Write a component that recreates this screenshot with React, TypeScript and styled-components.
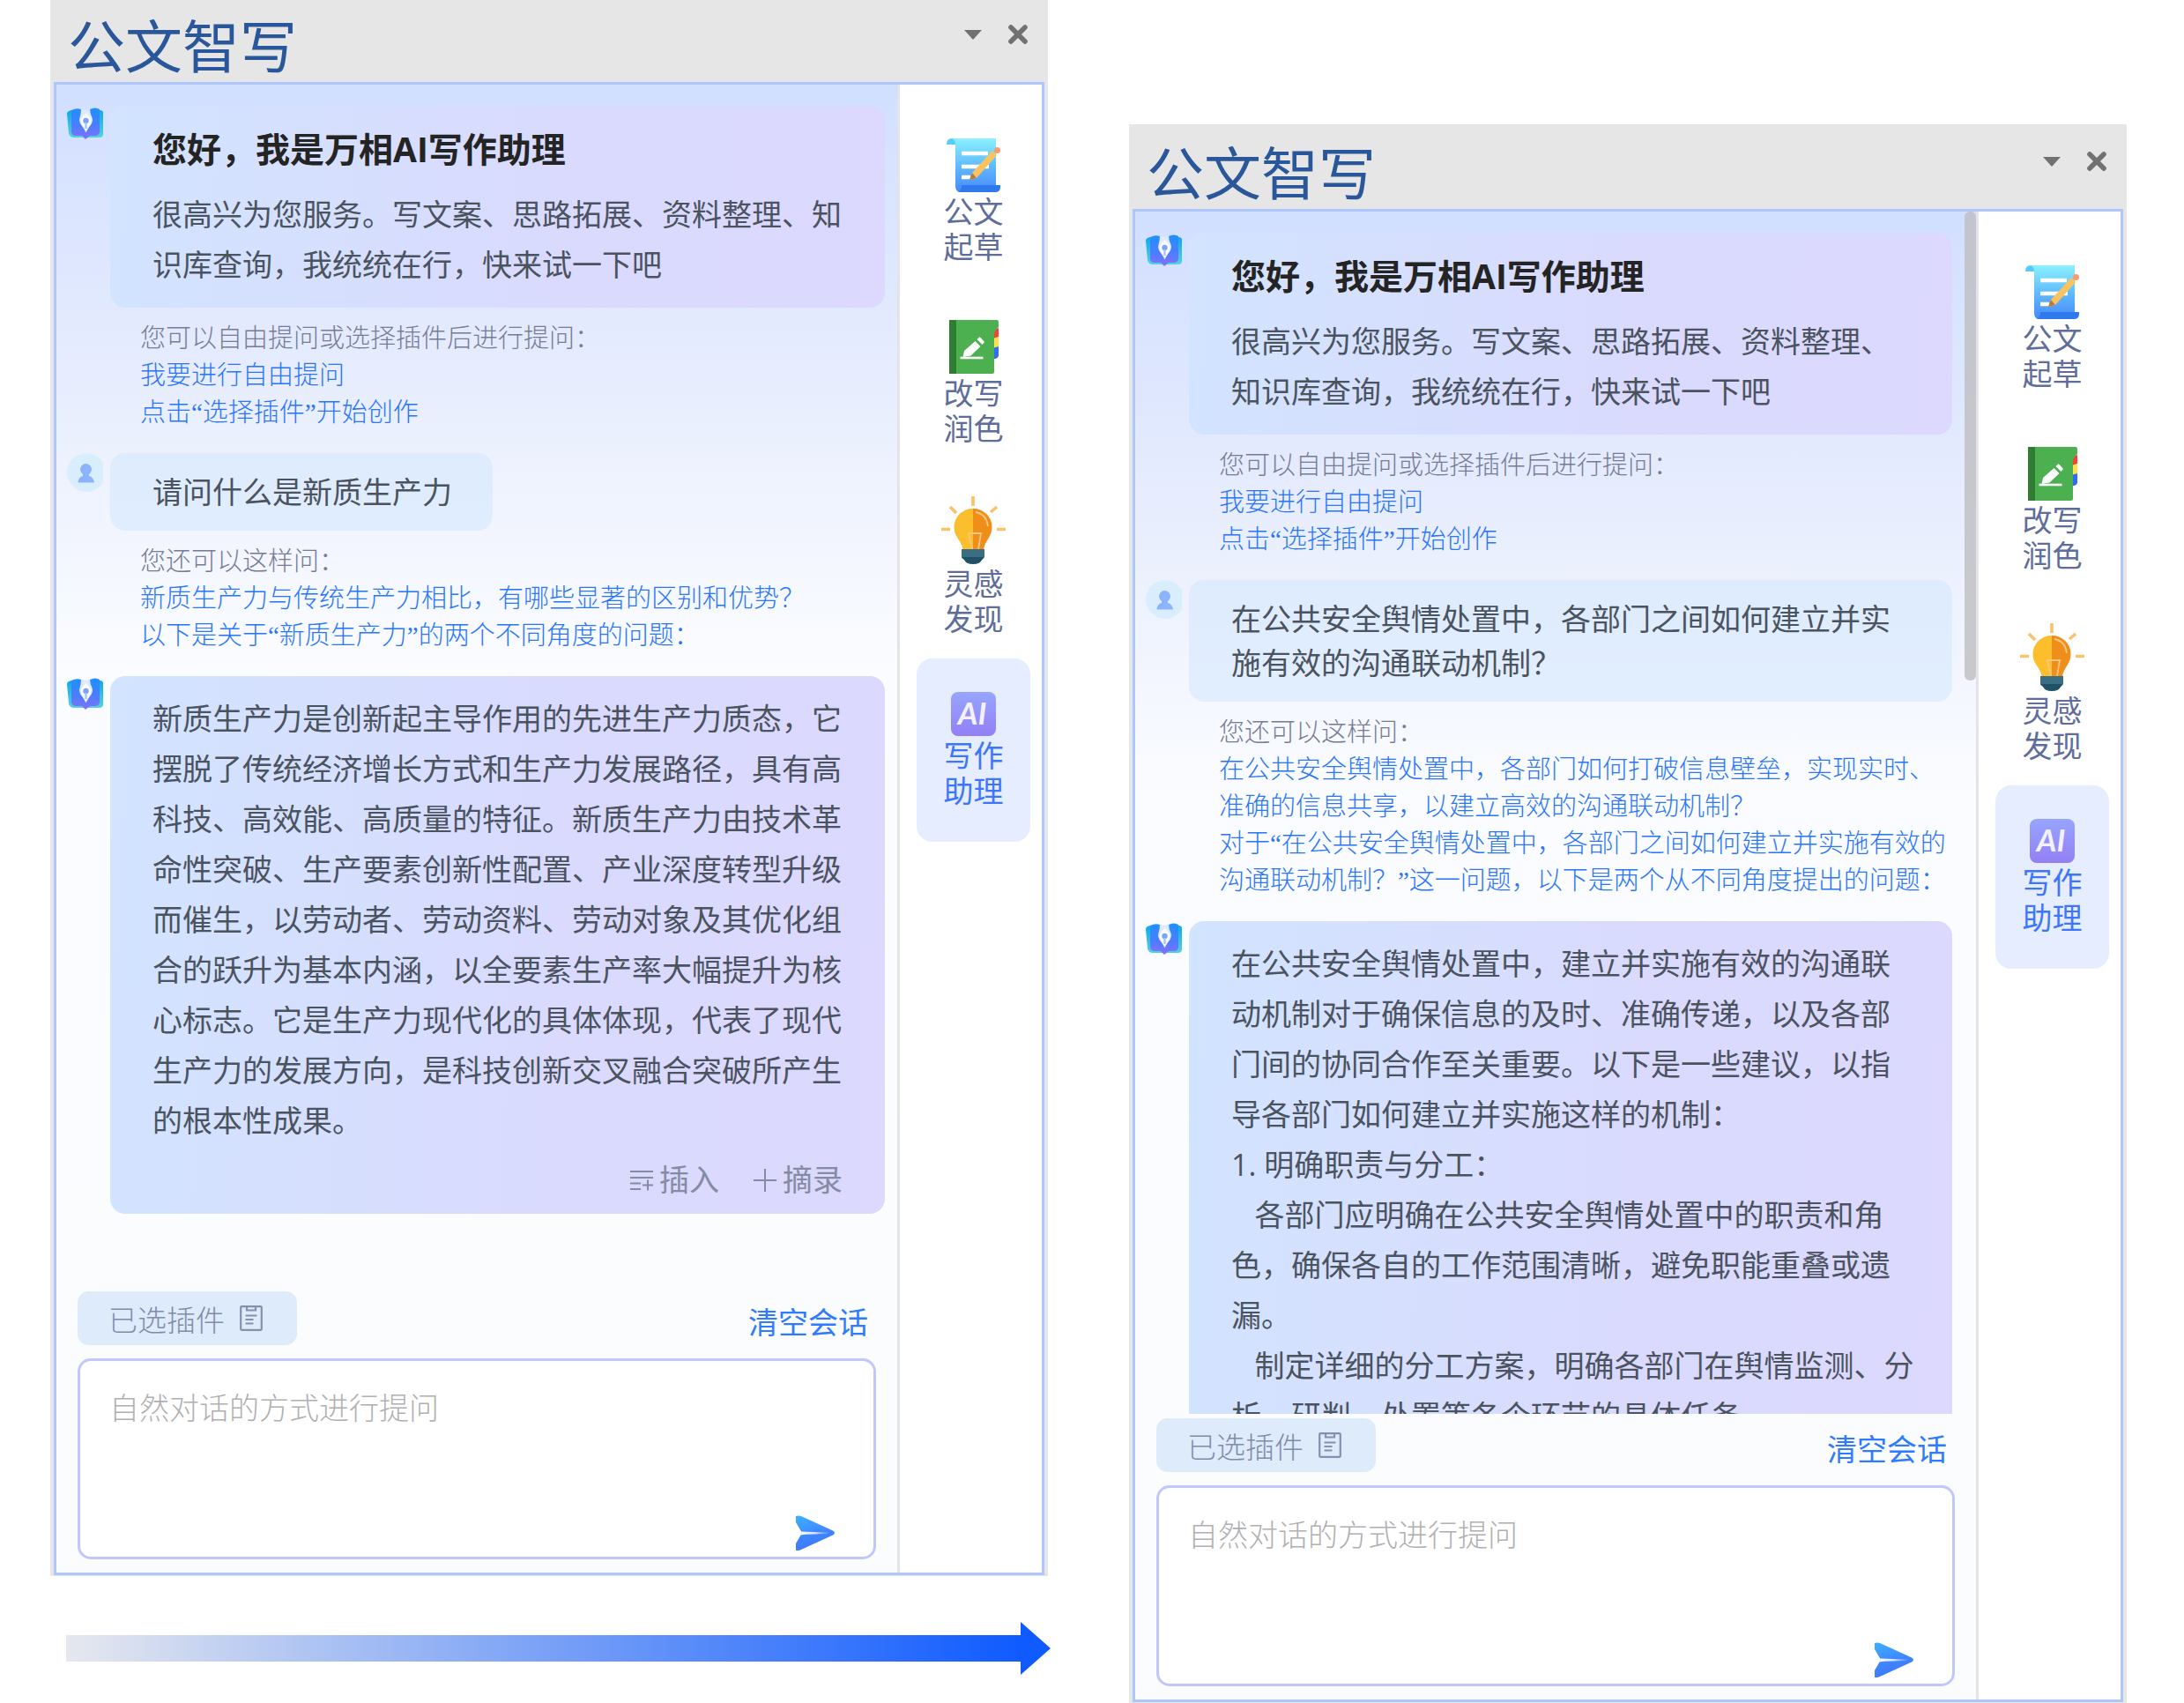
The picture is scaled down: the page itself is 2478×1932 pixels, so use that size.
import React from 'react';
import styled, { createGlobalStyle, css } from 'styled-components';

const sans = `"Open Sans", "Noto Sans CJK SC", sans-serif`;
const serif = `"Liberation Serif", "Noto Sans CJK SC", serif`;

const GlobalStyle = createGlobalStyle`
  *, *::before, *::after { box-sizing: border-box; }
  body { margin: 0; background: #fff; font-family: ${sans}; }
  h1, h2, p { margin: 0; font-weight: 400; }
  button { border: 0; padding: 0; background: none; font: inherit; color: inherit; cursor: pointer; }
  svg { display: block; }
`;

const Page = styled.main`
  display: grid;
  grid-template-columns: 1fr 1fr;
  gap: 92px;
  height: 100vh;
  padding: 0 65px 0 57px;
`;

const Column = styled.div<{ $top?: number }>`
  display: flex;
  flex-direction: column;
  min-width: 0;
  min-height: 0;
  padding-top: ${(p) => p.$top ?? 0}px;
`;

const Pane = styled.section`
  flex: 1;
  min-height: 0;
  display: flex;
  flex-direction: column;
  padding: 0 4px 1px;
  background: #e6e6e6;
`;

const PaneHeader = styled.header<{ $height: number }>`
  flex: none;
  display: flex;
  align-items: flex-end;
  justify-content: space-between;
  height: ${(p) => p.$height}px;
  padding: 0 19px 0 16px;
`;

const PaneTitle = styled.h1`
  color: #2a579a;
  font-size: 65px;
  line-height: 82px;
`;

const WindowControls = styled.div`
  display: flex;
  align-items: center;
  gap: 30px;
  padding-bottom: 43px;
`;

const PaneBody = styled.div`
  flex: 1;
  min-height: 0;
  display: flex;
  border: 3px solid #adc7fc;
  background: #fff;
`;

const Chat = styled.div`
  flex: 1;
  min-width: 0;
  display: flex;
  flex-direction: column;
  background: linear-gradient(180deg, #d1dfff 0%, #e3eafe 16%, #eef2fe 26%, #fafcff 39%, #fbfcfe 100%);
`;

const Scroller = styled.div`
  flex: 1;
  min-height: 0;
  display: flex;
`;

const Messages = styled.div`
  flex: 1;
  min-width: 0;
  display: flex;
  flex-direction: column;
  gap: 25px;
  overflow: hidden;
  padding: 24px 14px 0 12px;
`;

const ScrollTrack = styled.div`
  flex: none;
  width: 13px;
`;

const ScrollThumb = styled.div`
  height: 39%;
  border-radius: 6px;
  background: rgba(190, 190, 192, 0.8);
`;

const MessageRow = styled.div`
  flex: none;
  display: grid;
  grid-template-columns: 41px minmax(0, 1fr);
  column-gap: 8px;
  row-gap: 14px;
`;

const bubble = css`
  border-radius: 17px;
  color: #4b535f;
  font-size: 34px;
`;

const BotBubble = styled.div`
  ${bubble}
  padding: 20px 43px 20px 48px;
  line-height: 57px;
  white-space: pre-wrap;
  background: linear-gradient(93deg, #d2e4ff 0%, #d6dffe 30%, #d9dafe 58%, #dcd8fe 100%);
`;

const UserBubble = styled.div`
  ${bubble}
  justify-self: start;
  padding: 19px 46px 19px 48px;
  line-height: 50px;
  background: rgba(208, 230, 253, 0.5);
`;

const Greeting = styled.h2`
  margin-bottom: 18px;
  color: #242424;
  font-size: 39px;
  font-weight: 700;
  line-height: 57px;
`;

const Hints = styled.div`
  grid-column: 2;
  display: flex;
  flex-direction: column;
  align-items: flex-start;
  padding-left: 34px;
  font-family: ${serif};
  font-size: 29px;
  font-weight: 300;
  line-height: 42px;
  color: #767c96;
`;

const HintLink = styled.a`
  color: #2a76fb;
  text-decoration: none;
`;

const BubbleActions = styled.div`
  display: flex;
  justify-content: flex-end;
  gap: 39px;
  padding-top: 10px;
  margin: 0 5px -10px 0;
`;

const BubbleAction = styled.button`
  display: flex;
  align-items: center;
  gap: 7px;
  color: #858ba3;
`;

const Composer = styled.form`
  flex: none;
  display: flex;
  flex-direction: column;
  gap: 15px;
  padding: 5px 24px 15px;
`;

const ComposerBar = styled.div`
  display: flex;
  align-items: flex-end;
  justify-content: space-between;
  padding-right: 9px;
`;

const PluginChip = styled.button`
  display: flex;
  align-items: center;
  gap: 17px;
  height: 61px;
  padding: 0 39px 0 35px;
  border-radius: 13px;
  background: #deebfb;
  color: #818cab;
  font-family: ${serif};
  font-size: 33px;
  font-weight: 300;
`;

const ClearButton = styled.button`
  color: #2f7bff;
  font-size: 34px;
  line-height: 51px;
`;

const InputBox = styled.div`
  display: flex;
  flex-direction: column;
  height: 228px;
  padding: 28px 43px 7px 33px;
  border: 3px solid #c1c6fd;
  border-radius: 15px;
  background: #fff;
`;

const Prompt = styled.textarea`
  flex: 1;
  width: 100%;
  padding: 0;
  border: 0;
  outline: 0;
  resize: none;
  background: transparent;
  color: #4b535f;
  font-family: ${sans};
  font-size: 34px;
  font-weight: 300;
  line-height: 50px;
  &::placeholder { color: #b0b0b3; opacity: 1; }
`;

const SendButton = styled.button`
  align-self: flex-end;
`;

const Tools = styled.nav`
  flex: none;
  display: flex;
  flex-direction: column;
  width: 164px;
  padding: 23px 13px 0 19px;
  border-left: 3px solid #e4e4e6;
`;

const Tool = styled.button<{ $active?: boolean }>`
  display: flex;
  flex-direction: column;
  align-items: center;
  gap: 2px;
  padding: 38px 0 ${(p) => (p.$active ? 38 : 25)}px;
  border-radius: 18px;
  background: ${(p) => (p.$active ? '#e5edfe' : 'transparent')};
  color: ${(p) => (p.$active ? '#3e76fb' : '#5e6d9a')};
  font-size: 34px;
  line-height: 40px;
`;

const ToolIcon = styled.span<{ $height: number }>`
  display: flex;
  align-items: flex-end;
  height: ${(p) => p.$height}px;
`;

const ToolLabel = styled.span`
  width: 2em;
`;

const FlowArrow = styled.div`
  flex: none;
  display: flex;
  align-items: center;
  height: 144px;
  padding: 20px 0 0 18px;
  margin-right: -3px;
`;

const FlowShaft = styled.div`
  flex: 1;
  height: 30px;
  background: linear-gradient(90deg, #e6e8ee, #0f5bff);
`;

const CaretIcon = () => (
  <svg width="20" height="11" viewBox="0 0 20 11"><path d="M0 0h20L10 11z" fill="#717171" /></svg>
);

const CloseIcon = () => (
  <svg width="22" height="22" viewBox="0 0 22 22">
    <path d="M3 3l16 16M19 3L3 19" stroke="#717171" strokeWidth="5.6" strokeLinecap="round" />
  </svg>
);

const BotAvatar = () => (
  <svg width="41" height="44" viewBox="0 0 41 44" aria-hidden="true">
    <defs>
      <linearGradient id="botPage" x1="0" y1="0" x2="0" y2="1">
        <stop offset="0" stopColor="#1e90ff" />
        <stop offset="0.55" stopColor="#4a7dff" />
        <stop offset="1" stopColor="#8370ff" />
      </linearGradient>
      <linearGradient id="botCover" x1="0" y1="0" x2="0" y2="1">
        <stop offset="0" stopColor="#12a9e6" />
        <stop offset="1" stopColor="#4fd3dc" />
      </linearGradient>
    </defs>
    <path d="M0 9q0-3 5-4h32q4 0 4 3v24q0 4-5 4H8q-5 0-6-5z" fill="url(#botCover)" />
    <path d="M5 5q6-3 11-1 0 5-1 9h13q-2-4-2-9 6-3 11 0v26q-1 4-5 4h-6l-5 4-4-4h-7q-4 0-5-4z" fill="url(#botPage)" />
    <path d="M16 3.500q5 2.500 10 0 0 5 2.500 10 1.500 5-2.500 9.500-3 4-4.500 7.500-1.500-3.500-4.500-7.500-4-4.500-2.500-9.500Q16 9 16 3.500z" fill="#dfe9ff" />
    <path d="M21.500 8q4 4 6 8-1 6-6 12.500-5-6.500-6-12.500 2-4 6-8z" fill="#fbfdff" />
    <circle cx="21.500" cy="17" r="3.200" fill="#7ba3fb" />
    <path d="M21.500 19v7" stroke="#a9c2fb" strokeWidth="2.400" />
  </svg>
);

const UserAvatar = () => (
  <svg width="41" height="44" viewBox="0 0 41 44" aria-hidden="true">
    <circle cx="22" cy="22" r="22" fill="#d8eefd" />
    <circle cx="21.500" cy="18.500" r="6.500" fill="#8db3fe" />
    <path d="M18 23h7v3q5 1 6 7.500H12.500Q13 27 18 26z" fill="#8db3fe" />
  </svg>
);

const InsertIcon = () => (
  <svg width="26" height="26" viewBox="0 0 26 26" fill="none" stroke="#858ba3" strokeWidth="2">
    <path d="M0 3h26M0 10h26M0 16.500h12M0 23h12M14 18.500h12M20 12.500v12" />
  </svg>
);

const PlusIcon = () => (
  <svg width="26" height="26" viewBox="0 0 26 26" fill="none" stroke="#858ba3" strokeWidth="2">
    <path d="M0 13h26M13 0v26" />
  </svg>
);

const ClipboardIcon = () => (
  <svg width="26" height="29" viewBox="0 0 26 29" fill="none" stroke="#8490b0" strokeWidth="2.200">
    <rect x="1.200" y="1.200" width="23.600" height="26.600" rx="1" />
    <path d="M8 1.500v4h10v-4M6.500 11.500h13M6.500 16h9M6.500 20.500h9" />
  </svg>
);

const SendIcon = () => (
  <svg width="46" height="40" viewBox="0 0 46 40">
    <defs>
      <linearGradient id="send" x1="0" y1="0" x2="0.300" y2="1">
        <stop offset="0" stopColor="#3eb2ff" />
        <stop offset="0.600" stopColor="#3f86ff" />
        <stop offset="1" stopColor="#3c78fb" />
      </linearGradient>
      <linearGradient id="sendFold" x1="0" y1="0" x2="1" y2="0">
        <stop offset="0" stopColor="#fff" />
        <stop offset="0.500" stopColor="#cfe0ff" />
        <stop offset="1" stopColor="#3c78fb" />
      </linearGradient>
    </defs>
    <path d="M1 1q3-1 6 0l36 16.500q4 2.500 0 5L7 39q-3 1.500-6 .8V32l7-12L1 8z" fill="url(#send)" />
    <path d="M6 18.200q3 .5 35 1.300v1.200Q10 21.500 6 22.500L8 20.300z" fill="url(#sendFold)" />
  </svg>
);

const DraftIcon = () => (
  <svg width="61" height="61" viewBox="0 0 61 61">
    <defs>
      <linearGradient id="scroll" x1="0" y1="0" x2="0" y2="1">
        <stop offset="0" stopColor="#8af1ff" />
        <stop offset="0.500" stopColor="#62bcff" />
        <stop offset="1" stopColor="#4688fb" />
      </linearGradient>
    </defs>
    <path d="M0 7q0-7 6-7h6v7z" fill="#55cdfb" />
    <path d="M6 0h50v55q0 6-6 6H16q-6 0-6-7V7q0-5-4-7z" fill="url(#scroll)" />
    <path d="M17 53h44v2q0 6-6 6H12q5-1 5-8z" fill="#2f78ee" />
    <path d="M17 17h30M17 32h31M17 44h10" stroke="#fff" strokeWidth="4.500" />
    <path d="M52 14l5 5-23 26-8 2 3-8z" fill="#f9c45f" />
    <path d="M29 39l5 6-8 2z" fill="#b37a4c" />
    <circle cx="57.500" cy="13.500" r="3.500" fill="#fb9a6a" />
  </svg>
);

const PolishIcon = () => (
  <svg width="56" height="61" viewBox="0 0 56 61">
    <path d="M46 12l10-3v14H46z" fill="#f44336" />
    <path d="M46 22l10-3v14H46z" fill="#ffe14d" />
    <path d="M46 33l10-3v10q0 3-4 4h-6z" fill="#2f6df6" />
    <path d="M0 0h54q2 0 2 2v6q-5 4-5 10v41q0 2-2 2H0z" fill="#4caf50" />
    <path d="M0 0h8v61H0z" fill="#2e7d32" />
    <path d="M34.500 19l5.500 6-2.500 3-6-6zM29.500 24l6 6-11 10.500-9 1.500 1.500-7z" fill="#fff" />
    <path d="M12.500 43h26" stroke="#fff" strokeWidth="2.600" />
  </svg>
);

const IdeaIcon = () => (
  <svg width="73" height="77" viewBox="0 0 73 77">
    <path d="M36 0v11M10 12l7 7M63 12l-7 6M0 37.500h10M63 37.500h10" stroke="#fbc26c" strokeWidth="3.600" />
    <path d="M36 14a21 21 0 0 0-21.500 21c0 12 9 15 10 26H36z" fill="#fbbf2d" />
    <path d="M36 14a21 21 0 0 1 21.500 21c0 12-8.500 15-9.500 26H36z" fill="#ef8f1a" />
    <path d="M39 18q12 2 14 16M31 42h14l-3 18M31 42l4 18" fill="none" stroke="#fac67c" strokeWidth="1.800" />
    <path d="M23 60h26v9q-1 2-3 3-2 4-6 4h-8q-4 0-5-4-4-1-4-3z" fill="#3b6e80" />
    <path d="M24 69h24l-2 3q-2 5-10 5t-10-5z" fill="#1f5266" />
  </svg>
);

const AssistantIcon = () => (
  <svg width="51" height="50" viewBox="0 0 51 50">
    <defs>
      <linearGradient id="assistant" x1="0" y1="0" x2="0" y2="1">
        <stop offset="0" stopColor="#98a5ff" />
        <stop offset="1" stopColor="#927ff4" />
      </linearGradient>
    </defs>
    <rect width="51" height="50" rx="8" fill="url(#assistant)" />
    <text x="24" y="37" textAnchor="middle" fill="#f3f0ff" fontFamily="Lato, sans-serif" fontSize="35" fontStyle="italic" fontWeight="700">AI</text>
  </svg>
);

const tools = [
  { label: '公文起草', icon: <DraftIcon />, height: 61 },
  { label: '改写润色', icon: <PolishIcon />, height: 61 },
  { label: '灵感发现', icon: <IdeaIcon />, height: 71 },
  { label: '写作助理', icon: <AssistantIcon />, height: 50, active: true },
];

const HintList = ({ lead, links }: { lead: string; links: string[] }) => (
  <Hints>
    <span>{lead}</span>
    {links.map((link) => (
      <HintLink href="#" key={link}>{link}</HintLink>
    ))}
  </Hints>
);

interface AssistantPaneProps {
  headerHeight: number;
  question: string;
  followUps: string[];
  answer: string;
  writing?: boolean;
}

const AssistantPane = ({ headerHeight, question, followUps, answer, writing }: AssistantPaneProps) => (
  <Pane>
    <PaneHeader $height={headerHeight}>
      <PaneTitle>公文智写</PaneTitle>
      <WindowControls>
        <button type="button" aria-label="菜单"><CaretIcon /></button>
        <button type="button" aria-label="关闭"><CloseIcon /></button>
      </WindowControls>
    </PaneHeader>
    <PaneBody>
      <Chat>
        <Scroller>
          <Messages>
            <MessageRow>
              <BotAvatar />
              <BotBubble>
                <Greeting>您好，我是万相AI写作助理</Greeting>
                <p>很高兴为您服务。写文案、思路拓展、资料整理、知识库查询，我统统在行，快来试一下吧</p>
              </BotBubble>
              <HintList
                lead="您可以自由提问或选择插件后进行提问："
                links={['我要进行自由提问', '点击“选择插件”开始创作']}
              />
            </MessageRow>
            <MessageRow>
              <UserAvatar />
              <UserBubble>{question}</UserBubble>
              <HintList lead="您还可以这样问：" links={followUps} />
            </MessageRow>
            <MessageRow>
              <BotAvatar />
              <BotBubble>
                <p>{answer}</p>
                {!writing && (
                  <BubbleActions>
                    <BubbleAction type="button"><InsertIcon />插入</BubbleAction>
                    <BubbleAction type="button"><PlusIcon />摘录</BubbleAction>
                  </BubbleActions>
                )}
              </BotBubble>
            </MessageRow>
          </Messages>
          {writing && <ScrollTrack><ScrollThumb /></ScrollTrack>}
        </Scroller>
        <Composer onSubmit={(e) => e.preventDefault()}>
          <ComposerBar>
            <PluginChip type="button">已选插件<ClipboardIcon /></PluginChip>
            <ClearButton type="button">清空会话</ClearButton>
          </ComposerBar>
          <InputBox>
            <Prompt aria-label="自然对话的方式进行提问" placeholder="自然对话的方式进行提问" />
            <SendButton type="submit" aria-label="发送"><SendIcon /></SendButton>
          </InputBox>
        </Composer>
      </Chat>
      <Tools>
        {tools.map((tool) => (
          <Tool type="button" key={tool.label} $active={tool.active}>
            <ToolIcon $height={tool.height}>{tool.icon}</ToolIcon>
            <ToolLabel>{tool.label}</ToolLabel>
          </Tool>
        ))}
      </Tools>
    </PaneBody>
  </Pane>
);

const shortAnswer =
  '新质生产力是创新起主导作用的先进生产力质态，它摆脱了传统经济增长方式和生产力发展路径，具有高科技、高效能、高质量的特征。新质生产力由技术革命性突破、生产要素创新性配置、产业深度转型升级而催生，以劳动者、劳动资料、劳动对象及其优化组合的跃升为基本内涵，以全要素生产率大幅提升为核心标志。它是生产力现代化的具体体现，代表了现代生产力的发展方向，是科技创新交叉融合突破所产生的根本性成果。';

const longAnswer = `在公共安全舆情处置中，建立并实施有效的沟通联动机制对于确保信息的及时、准确传递，以及各部门间的协同合作至关重要。以下是一些建议，以指导各部门如何建立并实施这样的机制：
1. 明确职责与分工：
   各部门应明确在公共安全舆情处置中的职责和角色，确保各自的工作范围清晰，避免职能重叠或遗漏。
   制定详细的分工方案，明确各部门在舆情监测、分析、研判、处置等各个环节的具体任务。`;

export default function App() {
  return (
    <>
      <GlobalStyle />
      <Page>
        <Column>
          <AssistantPane
            headerHeight={93}
            question="请问什么是新质生产力"
            followUps={[
              '新质生产力与传统生产力相比，有哪些显著的区别和优势？',
              '以下是关于“新质生产力”的两个不同角度的问题：',
            ]}
            answer={shortAnswer}
          />
          <FlowArrow>
            <FlowShaft />
            <svg width="34" height="60" viewBox="0 0 34 60"><path d="M0 0l34 30L0 60z" fill="#0f5bff" /></svg>
          </FlowArrow>
        </Column>
        <Column $top={141}>
          <AssistantPane
            headerHeight={96}
            question="在公共安全舆情处置中，各部门之间如何建立并实施有效的沟通联动机制？"
            followUps={[
              '在公共安全舆情处置中，各部门如何打破信息壁垒，实现实时、准确的信息共享，以建立高效的沟通联动机制？',
              '对于“在公共安全舆情处置中，各部门之间如何建立并实施有效的沟通联动机制？”这一问题，以下是两个从不同角度提出的问题：',
            ]}
            answer={longAnswer}
            writing
          />
        </Column>
      </Page>
    </>
  );
}
